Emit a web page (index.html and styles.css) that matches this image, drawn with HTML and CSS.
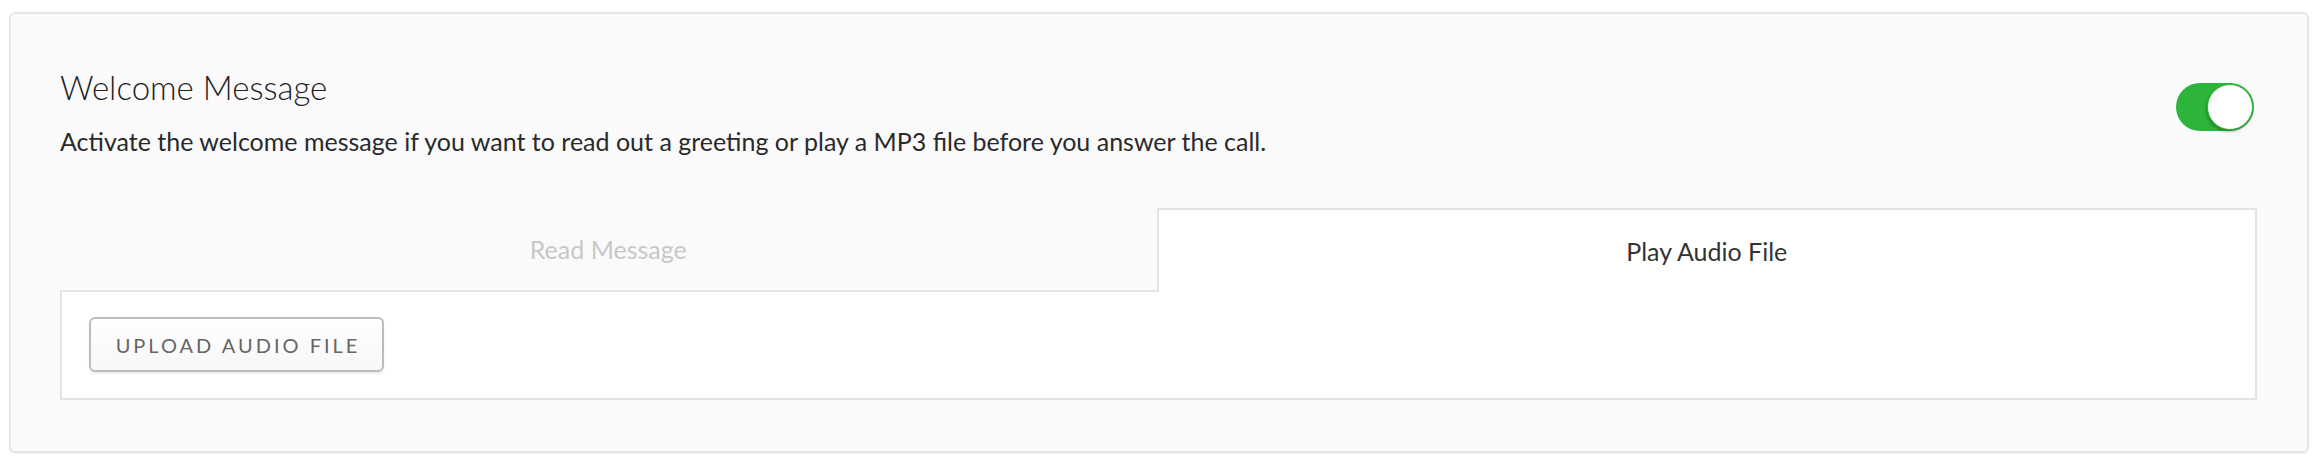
FILE: index.html
```html
<!DOCTYPE html>
<html>
<head>
<meta charset="utf-8">
<link rel="stylesheet" href="styles.css">
</head>
<body>
<div class="card">
  <div class="header">
    <div class="header-text">
      <h2 class="title">Welcome Message</h2>
      <p class="desc">Activate the welcome message if you want to read out a greeting or play a MP3 file before you answer the call.</p>
    </div>
    <div class="toggle"><div class="knob"></div></div>
  </div>
  <div class="tabs">
    <div class="tab">Read Message</div>
    <div class="tab active">Play Audio File</div>
  </div>
  <div class="panel">
    <button class="upload">UPLOAD AUDIO FILE</button>
  </div>
</div>
</body>
</html>
```

FILE: styles.css
```css
html, body {
  margin: 0;
  padding: 0;
  background: #ffffff;
}
body {
  padding: 12px 9px 11px 9px;
  font-family: Lato, "Open Sans", sans-serif;
}
.card {
  background: #fafafa;
  border: 2px solid #e6e6e6;
  border-radius: 6px;
  box-shadow: 0 1px 2px rgba(0,0,0,0.06);
  padding: 0 50px 0 49px;
  height: 437px;
  box-sizing: content-box;
}
.header {
  display: flex;
  justify-content: space-between;
  align-items: flex-start;
}
.title {
  margin: 0;
  padding-top: 53px;
  font-weight: 300;
  font-size: 33px;
  line-height: 40px;
  color: #222;
}
.desc {
  margin: 19px 0 0 0;
  font-size: 25px;
  line-height: 30px;
  color: #2a2a2a;
}
.toggle {
  margin-top: 69px;
  margin-right: 3px;
  width: 78px;
  height: 48px;
  border-radius: 24px;
  background: #2cb53a;
  position: relative;
}
.knob {
  position: absolute;
  right: 1px;
  top: 1px;
  width: 44px;
  height: 44px;
  border-radius: 50%;
  background: #fff;
  border: 1px solid #2cb53a;
  box-shadow: -1px 2px 3px rgba(0,0,0,0.25);
}
.tabs {
  display: flex;
  margin-top: 52px;
  height: 84px;
}
.tab {
  flex: 1 1 0;
  display: flex;
  align-items: center;
  justify-content: center;
  font-size: 25px;
  color: #c8c8c8;
  border-bottom: 2px solid #e4e4e4;
  box-sizing: border-box;
}
.tab.active {
  background: #fff;
  color: #333;
  border: 2px solid #e4e4e4;
  border-bottom: none;
}
.panel {
  background: #fff;
  border: 2px solid #e4e4e4;
  border-top: none;
  height: 108px;
  padding: 25px 0 0 27px;
  box-sizing: border-box;
}
.upload {
  width: 295px;
  height: 55px;
  border: 2px solid #bcbcbc;
  border-radius: 6px;
  background: linear-gradient(#ffffff, #f7f7f7);
  box-shadow: 0 2px 2px rgba(0,0,0,0.08);
  font-family: Lato, sans-serif;
  font-size: 20px;
  letter-spacing: 3px;
  color: #666;
  padding: 0 0 0 3px;
}
```
